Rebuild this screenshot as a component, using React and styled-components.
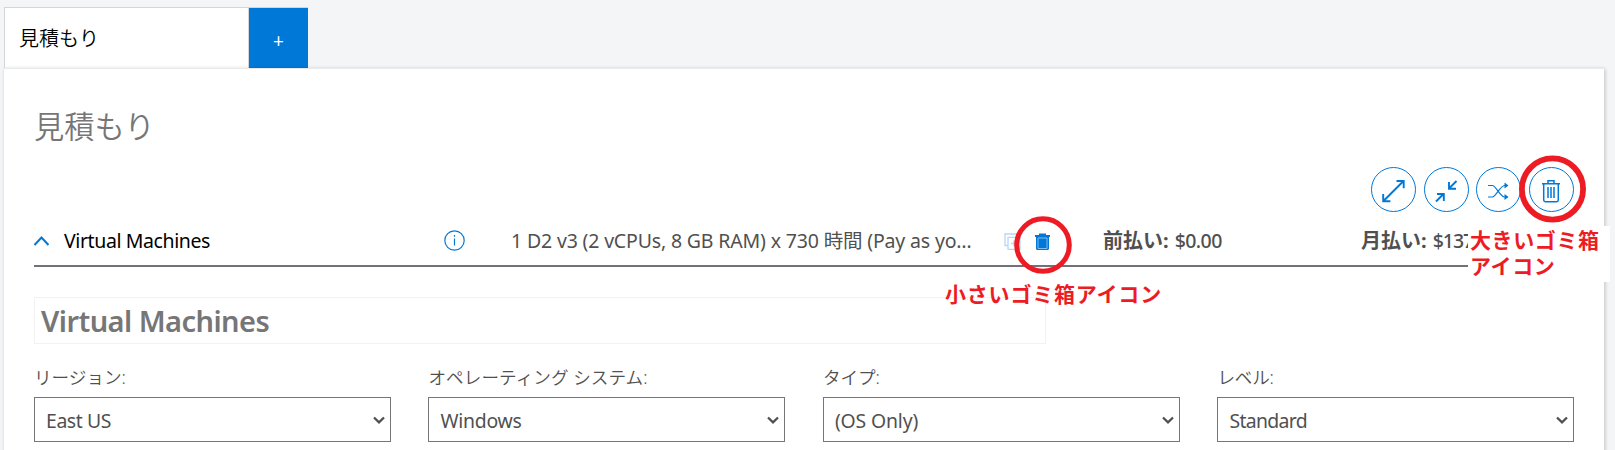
import React from "react";
import styled, { createGlobalStyle } from "styled-components";

const Global = createGlobalStyle`
  * { box-sizing: border-box; }
  body {
    margin: 0;
    background: #f4f5f7;
    color: #505050;
    font-family: "Noto Sans", "Noto Sans CJK JP", sans-serif;
    overflow: hidden;
  }
`;

const Page = styled.div`
  position: relative;
  height: 450px;
  padding: 7px 11px 0 4px;
  display: flex;
  flex-direction: column;
  overflow: hidden;
`;

const Tabs = styled.div`
  display: flex;
  height: 61px;
  flex: none;
`;

const Tab = styled.div`
  width: 245px;
  padding: 1px 0 0 14px;
  background: #fff;
  border: 1px solid #d4d5d8;
  border-bottom: 0;
  color: #000;
  font-size: 20px;
  font-weight: 350;
  line-height: 60px;
`;

const AddTab = styled.button`
  width: 59px;
  padding: 5px 0 0;
  border: 0;
  border-top: 1px solid #d4d5d8;
  background: #0078d7;
  color: #fff;
  font: 19px "Noto Sans", sans-serif;
`;

const Panel = styled.main`
  flex: none;
  height: 400px;
  padding: 35px 30px 0;
  background: #fff;
  border-top: 1px solid #e9eaec;
  box-shadow: 1px 1px 4px rgba(0, 0, 0, 0.22);
`;

const Title = styled.h1`
  margin: 0;
  height: 46px;
  color: #767676;
  font-size: 30.2px;
  font-weight: 350;
  line-height: 46px;
`;

const Toolbar = styled.div`
  display: flex;
  justify-content: flex-end;
  gap: 7.7px;
  margin-top: 17px;
`;

const RoundButton = styled.button`
  width: 45px;
  height: 45px;
  padding: 0;
  border: 1px solid #0078d7;
  border-radius: 50%;
  background: #fff;
  color: #0078d7;
  svg { display: block; }
`;

const ModuleRow = styled.div`
  display: flex;
  align-items: center;
  height: 55px;
  padding-top: 4px;
  border-bottom: 2px solid #737078;
  font-size: 19.5px;
  line-height: 28px;
  white-space: nowrap;
  svg { flex: none; }
`;

const Cell = styled.div`
  flex: none;
  display: flex;
  align-items: center;
  width: ${(p) => p.$w}px;
  padding-top: ${(p) => p.$drop || 0}px;
  color: ${(p) => p.$color || "inherit"};
  letter-spacing: ${(p) => p.$ls || 0}px;
`;

const Price = styled(Cell)`
  gap: 6px;
  font-weight: 500;
  b { font-weight: 700; letter-spacing: 0; font-size: 20px; }
`;

const NameField = styled.div`
  width: 1012px;
  height: 47px;
  margin-top: 30px;
  padding-left: 6px;
  border: 1px solid #f2f2f2;
  color: #767676;
  font-size: 29px;
  font-weight: 600;
  line-height: 45px;
  letter-spacing: -0.55px;
`;

const Options = styled.div`
  display: grid;
  grid-template-columns: repeat(4, 356.6px);
  justify-content: space-between;
  margin-top: 19px;
`;

const Label = styled.div`
  height: 34px;
  font-size: 17.6px;
  font-weight: 350;
  line-height: 28px;
  letter-spacing: ${(p) => p.$ls}px;
`;

const Select = styled.div`
  display: flex;
  align-items: center;
  justify-content: space-between;
  height: 45px;
  padding: 1px 5px 0 11px;
  border: 1px solid #767676;
  font-size: 19.4px;
  letter-spacing: ${(p) => p.$ls}px;
`;

const Ring = styled.svg`
  position: absolute;
  left: ${(p) => p.$x}px;
  top: ${(p) => p.$y}px;
`;

const Note = styled.div`
  position: absolute;
  left: ${(p) => p.$x}px;
  top: ${(p) => p.$y}px;
  width: ${(p) => p.$w}px;
  height: ${(p) => p.$h}px;
  padding-left: 2px;
  background: ${(p) => (p.$solid ? "#fff" : "transparent")};
  color: #ed1c24;
  font-family: "Noto Sans CJK JP", sans-serif;
  font-size: 21px;
  font-weight: 700;
  line-height: ${(p) => p.$lh || 26}px;
  letter-spacing: ${(p) => p.$ls}px;
  white-space: nowrap;
`;

const stroke = { fill: "none", stroke: "currentColor" };

const ExpandIcon = () => (
  <svg width="43" height="43" {...stroke} strokeWidth="1.9">
    <path d="M11.500 33 31.500 13M24.500 13h7.200v7.200M11.200 26v7.200h7.200" />
  </svg>
);
const CollapseIcon = () => (
  <svg width="43" height="43" {...stroke} strokeWidth="1.9">
    <path d="M31.500 13l-7.500 7.500M24 14v6.800h7M11 33.500l7.500-7.500M12 26h6.800v7" />
  </svg>
);
const ShuffleIcon = () => (
  <svg width="43" height="43" {...stroke} strokeWidth="1.200">
    <path d="M11 17.500h4.500c3 0 8 11.500 12 11.500h3M11 29h4.500c3 0 8-11.500 12-11.500h3" />
    <path d="M27.500 14.500l4 3-4 3zM27.500 26l4 3-4 3z" fill="currentColor" stroke="none" />
  </svg>
);
const BinIcon = () => (
  <svg width="43" height="43" {...stroke} strokeWidth="1.500">
    <path d="M12 15.700h18M18 15v-2.300h6V15M13.700 16v16q0 1.700 1.700 1.700h11.200q1.700 0 1.700-1.700V16M18 19v11M21 19v11M24 19v11" />
  </svg>
);
const SmallBin = () => (
  <svg width="15" height="18" viewBox="0 0 15 18">
    <path d="M0 2h4V.5h7V2h4v2H0zM1 4h13v11.500q0 1.500-1.500 1.500h-10Q1 17 1 15.500z" fill="#0078d7" />
    <path d="M3 5v10.500h9V5z" fill="none" stroke="#8cc4f0" strokeWidth=".9" />
  </svg>
);
const CopyIcon = () => (
  <svg width="17" height="17" fill="none" stroke="#b5d8f5" strokeWidth="1.300">
    <path d="M4 12.500H1V1h12v3M4 4.300h12v12H4zM10 7.500v6M7 10.500h6" />
  </svg>
);
const InfoIcon = () => (
  <svg width="21" height="21" {...stroke} strokeWidth="1.200">
    <circle cx="10.500" cy="10.500" r="9.700" />
    <path d="M10.500 8.500v7M10.500 5v1.700" />
  </svg>
);
const Caret = () => (
  <svg width="12" height="9" {...stroke} strokeWidth="2.300">
    <path d="M1 1.500l5 4.800L11 1.500" />
  </svg>
);

const options = [
  { label: "リージョン:", ls: 0, value: "East US", vls: -0.4 },
  { label: "オペレーティング システム:", ls: 0.05, value: "Windows", vls: -0.25 },
  { label: "タイプ:", ls: -0.1, value: "(OS Only)", vls: -0.15 },
  { label: "レベル:", ls: -0.2, value: "Standard", vls: -0.65 },
];

export default function App() {
  return (
    <Page>
      <Global />
      <Tabs>
        <Tab>見積もり</Tab>
        <AddTab>+</AddTab>
      </Tabs>
      <Panel>
        <Title>見積もり</Title>
        <Toolbar>
          <RoundButton aria-label="展開"><ExpandIcon /></RoundButton>
          <RoundButton aria-label="折りたたむ"><CollapseIcon /></RoundButton>
          <RoundButton aria-label="並べ替え"><ShuffleIcon /></RoundButton>
          <RoundButton aria-label="削除"><BinIcon /></RoundButton>
        </Toolbar>
        <ModuleRow>
          <Cell $w={30}>
            <svg width="16" height="10" fill="none" stroke="#0078d7" strokeWidth="2">
              <path d="M.5 9 7.500 1.500 14.500 9" />
            </svg>
          </Cell>
          <Cell $w={380} $color="#000" $ls={-0.4}>Virtual Machines</Cell>
          <Cell $w={67} $color="#0078d7"><InfoIcon /></Cell>
          <Cell $w={493} $ls={-0.16}>1 D2 v3 (2 vCPUs, 8 GB RAM) x 730 時間 (Pay as yo…</Cell>
          <Cell $w={31} $drop={2}><CopyIcon /></Cell>
          <Cell $w={68} $drop={3}><SmallBin /></Cell>
          <Price $w={258} $ls={-0.55}><b>前払い:</b>$0.00</Price>
          <Price $w={110} $ls={-1}><b>月払い:</b>$137</Price>
        </ModuleRow>
        <NameField>Virtual Machines</NameField>
        <Options>
          {options.map((o) => (
            <div key={o.label}>
              <Label $ls={o.ls}>{o.label}</Label>
              <Select $ls={o.vls}>{o.value}<Caret /></Select>
            </div>
          ))}
        </Options>
      </Panel>
      <Note $solid $x={1468} $y={226} $w={142} $h={56} $ls={0.6}>大きいゴミ箱<br />アイコン</Note>
      <Note $x={943} $y={280} $w={224} $h={28} $ls={0.8}>小さいゴミ箱アイコン</Note>
      <Ring $x={1518} $y={154} width="70" height="70">
        <circle cx="34.500" cy="35" r="30.600" fill="none" stroke="#ed1c24" strokeWidth="5.800" />
      </Ring>
      <Ring $x={1013} $y={215} width="60" height="60">
        <circle cx="30" cy="30" r="26.300" fill="none" stroke="#ed1c24" strokeWidth="5" />
      </Ring>
    </Page>
  );
}
